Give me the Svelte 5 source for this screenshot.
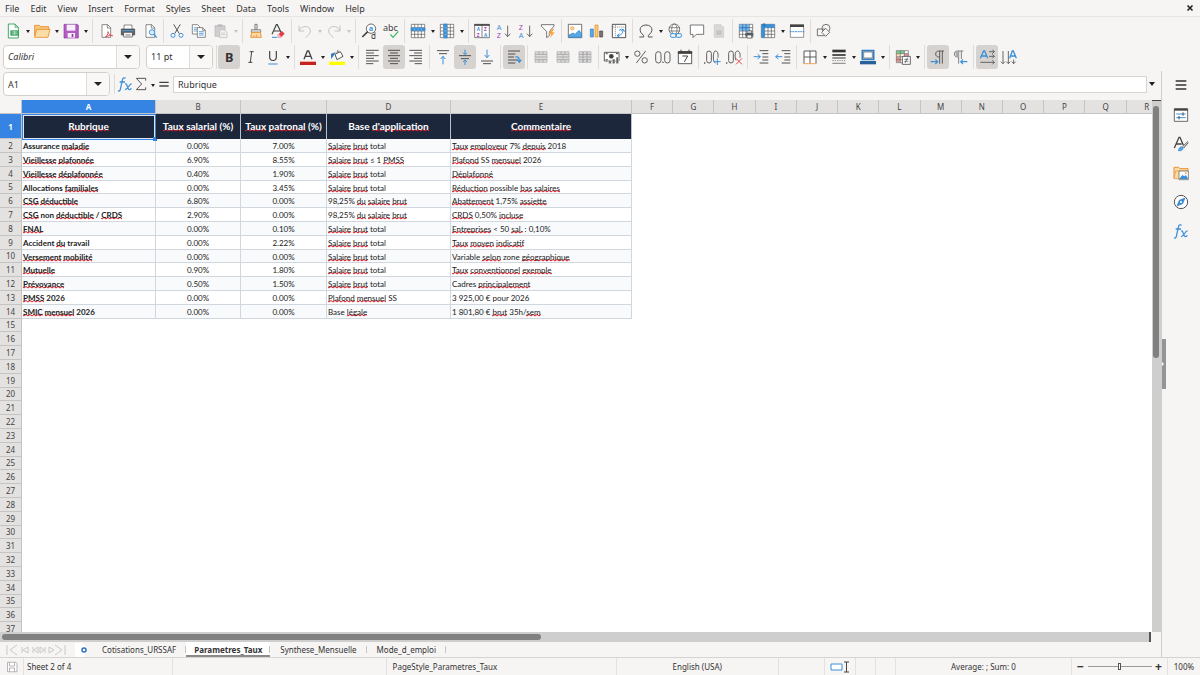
<script>
    const menus = ["File", "Edit", "View", "Insert", "Format", "Styles", "Sheet", "Data", "Tools", "Window", "Help"]

    const blue = "#3a8fd9"
    const page = '<path d="M6 2.500h8.500l4.500 4.500v14.500h-13z" fill="#fff" stroke="#555"/><path d="M14 2.500v5h5" fill="none" stroke="#555"/>'
    function lines(list, color = "#444") {
        return list.map(([x1, x2, y]) => `<path d="M${x1} ${y}H${x2}" stroke="${color}" stroke-width="1.400"/>`).join("")
    }
    const gridbase = '<path d="M2 2h20v20H2zM2 7h20M2 12h20M2 17h20M7 2v20M12 2v20M17 2v20" fill="#fff" stroke="#555"/>'
    const mergebase = '<path d="M3 4h18v16H3z" fill="#ddd" stroke="#aaa"/><path d="M3 8h18M3 16h18M3 12h18M9 4v4M15 4v4M9 16v4M15 16v4" fill="none" stroke="#aaa" stroke-width="1.500"/>'

    // every icon is drawn on a 24 x 24 box
    const icons = {
        new: '<path d="M5 1.500h10l5 5v16H5z" fill="#fff" stroke="#35a35c" stroke-width="1.400"/><path d="M15 1.500v5h5z" fill="#bfe6c8" stroke="#35a35c"/><path d="M8 11h13v8H8z" fill="#35a35c"/><path d="M10 13.500h9M10 16.200h9M14.500 12v6" stroke="#fff" stroke-width=".8"/>',
        open: '<path d="M1 20V3.500h7l2 2h12v5" fill="#f7c77d" stroke="#e58b28" stroke-width="1.300"/><path d="M1 21.500l3-12h20l-3 12z" fill="#fbdca6" stroke="#e58b28" stroke-width="1.200"/>',
        save: '<path d="M1.500 2h20l1.500 1.500V22.500H1.500z" fill="#b25cc4" stroke="#8d3ca3"/><path d="M5.500 2.500h13v9h-13z" fill="#f6eef8"/><path d="M7 15h11v7H7z" fill="#f6eef8"/><path d="M13 16.500h2.500V21H13z" fill="#8d3ca3"/>',
        pdf: page + '<path d="M11 21c4-2 5-8 4-8s1 5 7 6c-3-1-7 0-11 2z" fill="none" stroke="#e04c5b" stroke-width="1.500"/>',
        print: '<path d="M6 9V3h12v6" fill="#fff" stroke="#555"/><path d="M2 9h20v9H2z" fill="#58636e" stroke="#444"/><path d="M5.500 14h13v7h-13z" fill="#fff" stroke="#444"/><path d="M3.500 11.500h17" stroke="#4ba1df" stroke-width="1.500"/><path d="M8 17h8M8 19h8" stroke="#888"/>',
        preview: page + '<circle cx="15" cy="14" r="4" fill="#d8ecfb" stroke="#3a8fd9" stroke-width="1.400"/><path d="M18 17l4 5" stroke="#3a8fd9" stroke-width="2"/>',
        cut: '<path d="M7 2l8.500 14M17 2L8.500 16" stroke="#555" stroke-width="1.500" fill="none"/><circle cx="6" cy="18.500" r="3" fill="#fff" stroke="#3a8fd9" stroke-width="1.500"/><circle cx="18" cy="18.500" r="3" fill="#fff" stroke="#3a8fd9" stroke-width="1.500"/>',
        copy: '<path d="M2 2.500h8l3 3v11H2z" fill="#fff" stroke="#555"/><path d="M4 7h6M4 9.500h6M4 12h5" stroke="#3a8fd9"/><path d="M9.500 7h8l4 4v10.500h-12z" fill="#fff" stroke="#555"/><path d="M17.500 7v4h4" fill="none" stroke="#555"/><path d="M12 13h7M12 15.500h7M12 18h7" stroke="#3a8fd9" stroke-width="1.200"/>',
        paste: '<path d="M3 4h15v16H3z" fill="#cfcfcf" stroke="#b5b5b5"/><path d="M7 2h7v4H7z" fill="#bbb"/><path d="M10 10h7l4 4v8H10z" fill="#f1f1f1" stroke="#b5b5b5"/><path d="M12 15h6M12 17.500h7" stroke="#c2c2c2"/>',
        brush: '<path d="M10.500 2h3v8h-3z" fill="#fff" stroke="#555" stroke-width="1.200"/><path d="M5 10h14v4H5z" fill="#ddd" stroke="#666"/><path d="M5.500 14h13l1.500 7.500H4z" fill="#fbdca6" stroke="#e58b28" stroke-width="1.300"/><path d="M9 21v-3M13 21v-4" stroke="#e58b28"/>',
        clear: '<path d="M3 17L9.500 2.500h1.500L17 15M5.500 12H15" fill="none" stroke="#444" stroke-width="1.700"/><path d="M3 21.500h8" stroke="#3a8fd9" stroke-width="1.500"/><path d="M11 18l7-6 4 4-6 6h-3z" fill="#e23e4a"/><path d="M11 18l2-2 4 5-1 1h-3z" fill="#f7b6bb"/>',
        undo: '<path d="M3 4v8h8M3 12c3-9 17-9 17 0 0 5-4 6-7 10" fill="none" stroke="#c4c4c4" stroke-width="1.500"/>',
        redo: '<path d="M21 4v8h-8M21 12c-3-9-17-9-17 0 0 5 4 6 7 10" fill="none" stroke="#c4c4c4" stroke-width="1.500"/>',
        find: '<circle cx="15" cy="8.500" r="7" fill="#fff" stroke="#555" stroke-width="1.300"/><path d="M10 13l-8 8" stroke="#444" stroke-width="2.500"/><text x="11.500" y="12" font-size="11" font-weight="700" fill="#3a8fd9">a</text><text x="15" y="24" font-size="12" fill="#333">d</text>',
        spell: '<text x="0" y="12" font-size="13.500" fill="#444">abc</text><path d="M11 17l4 4.500 8-9" fill="none" stroke="#35b566" stroke-width="1.800"/>',
        row: gridbase + '<path d="M1 7h22v5H1z" fill="#3a8fd9"/><path d="M7 7v5M12 7v5M17 7v5" stroke="#7cc0f3"/>',
        col: gridbase + '<path d="M7 1h5.500v22H7z" fill="#3a8fd9"/><path d="M7 7h5M7 12h5M7 17h5" stroke="#7cc0f3"/>',
        sort: '<path d="M1 2h22v20H1zM12 2v20" fill="#fff" stroke="#444"/><path d="M.5 3h23" stroke="#444" stroke-width="2.500"/><text x="4" y="12.500" font-size="7" font-weight="700" fill="#3a8fd9">A</text><text x="4" y="21" font-size="7" font-weight="700" fill="#a347ba">Z</text><text x="15" y="12.500" font-size="7" font-weight="700" fill="#a347ba">Z</text><text x="15" y="21" font-size="7" font-weight="700" fill="#3a8fd9">A</text>',
        az: '<text x="1" y="10" font-size="11" fill="#3a8fd9">A</text><text x="1" y="23" font-size="11" fill="#a347ba">Z</text><path d="M17.500 4v16M13.500 16l4 4.500 4-4.500" fill="none" stroke="#555" stroke-width="1.300"/>',
        za: '<text x="1" y="10" font-size="11" fill="#a347ba">Z</text><text x="1" y="23" font-size="11" fill="#3a8fd9">A</text><path d="M17.500 4v16M13.500 16l4 4.500 4-4.500" fill="none" stroke="#555" stroke-width="1.300"/>',
        filter: '<path d="M2 2.500h19v2L14 13v6l-4 3v-9L2 4.500z" fill="#fff" stroke="#555" stroke-width="1.200"/><path d="M17 9l-4 8h4l-2 6 7-9h-4l3-5z" fill="#f6a544"/>',
        image: '<path d="M2 2h20v20H2z" fill="#fff" stroke="#555" stroke-width="1.200"/><path d="M3 18l6-3 3 2 6-6 4 5v5.500H3z" fill="#58a9e6" stroke="#2f7fc5"/><circle cx="8" cy="8" r="2.500" fill="#fbdca6" stroke="#e58b28"/>',
        chart: '<path d="M2 9h4.500v12H2z" fill="#58a9e6" stroke="#2f7fc5"/><path d="M9 3h4.500v18H9z" fill="#fbc87a" stroke="#e58b28"/><path d="M16 12h4.500v9H16z" fill="#777" stroke="#444"/>',
        pivot: '<path d="M2 2h20v20H2z" fill="#fff" stroke="#555" stroke-width="1.500"/><path d="M3 6h18M6.500 3v18" stroke="#777" stroke-dasharray="2 1"/><path d="M9 19c6 0 9-3 9-9M18 9l-3 3.500M18 9l2.500 4M9 19l4-3M9 19l4 2.500M12 11l4-2" fill="none" stroke="#3a8fd9" stroke-width="1.500"/>',
        omega: '<path d="M2 21h6.500v-2.500C0 13 2 3 12 3s12 10 3.500 15.500V21H22" fill="none" stroke="#555" stroke-width="1.500"/>',
        link: '<circle cx="11" cy="9.500" r="8" fill="#fff" stroke="#555" stroke-width="1.200"/><ellipse cx="11" cy="9.500" rx="4" ry="8" fill="none" stroke="#555"/><path d="M3 7h16M3 12h16" stroke="#555"/><rect x="5" y="16" width="9" height="5.500" rx="2.700" fill="#f6f5f4" stroke="#3a8fd9" stroke-width="1.500"/><rect x="13" y="16" width="9" height="5.500" rx="2.700" fill="none" stroke="#3a8fd9" stroke-width="1.500"/>',
        comment: '<path d="M2 3h20v14H11l-5 5v-5H2z" fill="#fff" stroke="#555" stroke-width="1.200"/>',
        header: '<path d="M5 2.500h10l4 4v15H5z" fill="#d8d8d8" stroke="#c8c8c8"/><path d="M8 11h8v7H8z" fill="#c4c4c4"/>',
        area: gridbase + '<path d="M2 2h15v10H2z" fill="#58a9e6" opacity=".8"/><path d="M2 7h15M7 2v10M12 2v10" stroke="#2671b5"/><path d="M11 15h12v5H11z" fill="#58636e"/><path d="M13.500 12h7v3h-7zM13.500 18h7v4.500h-7z" fill="#fff" stroke="#444"/>',
        freeze: gridbase + '<path d="M2 2h20v5H7v15H2z" fill="#3a8fd9"/><path d="M6 0v6M3 3h6" stroke="#2671b5" stroke-width="1.500"/>',
        split: '<path d="M1.500 2h21v4.500h-21z" fill="#444"/><path d="M2 6v15.500h20V6" fill="#fff" stroke="#666"/><path d="M1 13h22" stroke="#3a8fd9" stroke-width="1.500" stroke-dasharray="3 1"/>',
        shapes: '<path d="M2 9h11v10H2z" fill="none" stroke="#555" stroke-width="1.200"/><circle cx="15" cy="8" r="6" fill="none" stroke="#555" stroke-width="1.200"/><path d="M14.500 8l6 6-6 6-6-6z" fill="#f6f5f4" stroke="#555" stroke-width="1.200"/>',
        bold: '<text x="6" y="19" font-size="19" font-weight="700" fill="#333">B</text>',
        italic: '<path d="M10 4h6M8 20h6M13 4l-2 16" fill="none" stroke="#444" stroke-width="1.500"/>',
        underline: '<path d="M7 3v9c0 7 10 7 10 0V3" fill="none" stroke="#444" stroke-width="1.800"/><path d="M5 22.500h14" stroke="#3a8fd9" stroke-width="1.500"/>',
        color: '<path d="M6 15.500L11 3h2l5 12.500M8 11h8" fill="none" stroke="#444" stroke-width="2"/><path d="M0 19h24v5H0z" fill="#c9211e"/>',
        fill: '<path d="M9 8l8-4 4 7-9 5z" fill="#fff" stroke="#555" stroke-width="1.500"/><path d="M12 6l1-4 2 4" fill="none" stroke="#555"/><path d="M3 15V7l7-2-3 5z" fill="#2f7fc5"/><path d="M0 19h24v5H0z" fill="#ffff00"/>',
        left: lines([[3, 22, 2], [3, 15, 6], [3, 22, 10], [3, 15, 14], [3, 22, 18], [3, 14, 22]]),
        center: lines([[3, 21, 2], [6, 18, 6], [3, 21, 10], [6, 18, 14], [3, 21, 18], [6, 18, 22]]),
        right: lines([[2, 21, 2], [9, 21, 6], [2, 21, 10], [9, 21, 14], [2, 21, 18], [10, 21, 22]]),
        top: lines([[3, 21, 2.5], [6, 18, 7]]) + `<path d="M12 23V11M8.500 15l3.500-4 3.500 4" fill="none" stroke="${blue}" stroke-width="1.500"/>`,
        middle: lines([[3, 21, 10], [6, 18, 14.5]]) + `<path d="M12 1v7M9 5.500l3 3 3-3M12 24v-7M9 19.500l3-3 3 3" fill="none" stroke="${blue}" stroke-width="1.500"/>`,
        bottom: lines([[3, 21, 18], [6, 18, 22]]) + `<path d="M12 1v12M8.500 9l3.500 4 3.500-4" fill="none" stroke="${blue}" stroke-width="1.500"/>`,
        wrap: lines([[3, 21, 3], [3, 14, 7.5], [3, 12, 12], [3, 18, 16.5], [3, 14, 21]]) + `<path d="M14 12c4-1 6 1 6 6M16.500 16l3.500 4 3-4" fill="none" stroke="${blue}" stroke-width="1.800"/>`,
        merge: mergebase,
        mergec: mergebase + '<path d="M12 8v8" stroke="#aaa"/>',
        unmerge: mergebase + '<path d="M9 4v16M15 4v16" stroke="#aaa" stroke-width="1.500"/>',
        money: '<path d="M.5 5h22v13H.5z" fill="#fff" stroke="#444" stroke-width="1.300"/><circle cx="11" cy="11" r="3.500" fill="#444"/><path d="M2.500 7h3M18 7h3M2.500 16h3" stroke="#444" stroke-width="1.500"/><path d="M7 17h4v5H7zM12.500 15h4v7h-4zM18 12h4v10h-4z" fill="#666" stroke="#f6f5f4" stroke-width=".8"/>',
        percent: '<circle cx="6.500" cy="7" r="4" fill="none" stroke="#555" stroke-width="1.400"/><circle cx="17.500" cy="17" r="4" fill="none" stroke="#555" stroke-width="1.400"/><path d="M19 3L5 21" stroke="#555" stroke-width="1.400"/>',
        number: '<rect x="1" y="4" width="8" height="17" rx="4" fill="none" stroke="#555" stroke-width="1.400"/><rect x="14.500" y="4" width="8" height="17" rx="4" fill="none" stroke="#555" stroke-width="1.400"/><path d="M11 20h2" stroke="#555" stroke-width="2"/>',
        date: '<path d="M2 4h20v18H2z" fill="#fff" stroke="#444" stroke-width="1.300"/><path d="M2 4h20v2.500H2zM6 1v4M18 1v4" fill="#444" stroke="#444" stroke-width="1.500"/><path d="M8 10.500h8l-5 9" fill="none" stroke="#444" stroke-width="1.500"/>',
        adddec: '<path d="M0 21h2" stroke="#555" stroke-width="2"/><rect x="4" y="3" width="7" height="18" rx="3.500" fill="none" stroke="#555" stroke-width="1.400"/><path d="M17 21c-4 0-4-18 0-18 4 0 4.500 5 4 10" fill="none" stroke="#555" stroke-width="1.400"/><path d="M20 14v10M15 19h10" stroke="#3a8fd9" stroke-width="1.500"/>',
        deldec: '<path d="M0 21h2" stroke="#555" stroke-width="2"/><rect x="4" y="3" width="7" height="18" rx="3.500" fill="none" stroke="#555" stroke-width="1.400"/><path d="M15 17c-2-4-2-14 2-14s4.500 5 4 10" fill="none" stroke="#555" stroke-width="1.400"/><path d="M15 14l9 9M24 14l-9 9" stroke="#e04c4c" stroke-width="1.500"/>',
        indent: lines([[10, 23, 2.5], [14, 23, 7], [14, 23, 12], [14, 23, 16.5], [10, 23, 21]]) + `<path d="M1 11.500h10M7 8l4 3.500L7 15" fill="none" stroke="${blue}" stroke-width="1.500"/>`,
        outdent: lines([[10, 23, 2.5], [14, 23, 7], [14, 23, 12], [14, 23, 16.5], [10, 23, 21]]) + `<path d="M1 11.500h10M5 8l-4 3.500L5 15" fill="none" stroke="${blue}" stroke-width="1.500"/>`,
        borders: '<path d="M3 22V3h18v19M12 3v19M3 12h18" fill="#fff" stroke="#444" stroke-width="1.300"/><path d="M3 22h18" stroke="#f0a35e" stroke-width="1.500"/>',
        style: '<path d="M2 3h20" stroke="#333" stroke-width="4"/><path d="M2 9h20" stroke="#333" stroke-width="2.500"/><path d="M2 13.500h20" stroke="#333" stroke-width="1.500"/><path d="M2 17.500h20" stroke="#555" stroke-dasharray="2 1.500"/><path d="M2 21.500h20" stroke="#444"/>',
        bcolor: '<path d="M3.500 2.500h17v13h-17z" fill="#fff" stroke="#2f7fc5" stroke-width="2.500"/><path d="M5.500 4.500h13v9h-13z" fill="#fff" stroke="#555"/><path d="M0 18h24v5H0z" fill="#2a6099"/>',
        cond: '<path d="M2 2.500h18v18H2z" fill="#fff"/><path d="M2 2.500h12V7H2z" fill="#7bd08f"/><path d="M14 7h6v4h-6zM2 12h6v8H2z" fill="#f0958f"/><path d="M2 7h6v4H2z" fill="#fbdca6"/><path d="M2 2.500h18v18H2zM2 7h18M2 11.500h18M2 16h18M8 2.500v18M14 2.500v18" fill="none" stroke="#666"/><path d="M11 11h12v12H11z" fill="#fff" stroke="#444" stroke-width="1.200"/><path d="M14 15.500h6M14 18.500h6M19 13l-4 8" stroke="#444"/>',
        ltr: '<path d="M21 3h-8c-6 0-6 9 0 9h2M14.500 3v19M18.500 3v19" fill="none" stroke="#555" stroke-width="1.400"/><path d="M1 19h10M8 15.500l3.500 3.500L8 22.500" fill="none" stroke="#3a8fd9" stroke-width="1.700"/>',
        rtl: '<path d="M17 3H8c-6 0-6 9 0 9h1M10 3v19M14 3v12" fill="none" stroke="#777" stroke-width="1.400"/><path d="M5 4h5v8H6z" fill="#aaa"/><path d="M23 19H13M16.500 15.500L13 19l3.500 3.500" fill="none" stroke="#3a8fd9" stroke-width="1.700"/>',
        horiz: '<path d="M2 14L7 3h1.500L13 14M4 10.500h7" fill="none" stroke="#3a8fd9" stroke-width="2"/><path d="M15 4h8M15 11h8M2 20h21M20 1l3 3-3 3M20 8l3 3-3 3M20 17l3 3-3 3" fill="none" stroke="#555" stroke-width="1.300"/>',
        vert: '<path d="M13 14l4-11h1.500l4.500 11M14 10.500h7" fill="none" stroke="#3a8fd9" stroke-width="2"/><path d="M3 3v19M11 3v19M19 16v6M0 19l3 3 3-3M8 19l3 3 3-3M16 19l3 3 3-3" fill="none" stroke="#555" stroke-width="1.300"/>',
        fx: '<path d="M13 3.500c-3-2-4.500 0-5 3L5 20c-.5 2.500-2 3-3.500 2M4 9h8" fill="none" stroke="#3a8fd9" stroke-width="1.900"/><path d="M12 12c4-2 3 9 7 8.500 1 0 2-1 2.500-2M22 12c-4-1-5 9-10 8.500" fill="none" stroke="#3a8fd9" stroke-width="1.900"/>',
        sigma: '<path d="M19 7V3.500H5l8 8.500-8 8.500h14V17" fill="none" stroke="#555" stroke-width="1.500"/>',
        equals: '<path d="M5 9.500h14M5 15h14" stroke="#444" stroke-width="2"/>',
        burger: '<path d="M4 6h16M4 12h16M4 18h16" stroke="#333" stroke-width="2.200"/>',
        props: '<path d="M2 2.500h20v19H2z" fill="#fff" stroke="#555" stroke-width="1.300"/><path d="M2 4h20" stroke="#444" stroke-width="3"/><path d="M5 10.500h14M5 16h14" stroke="#3a8fd9" stroke-width="1.500"/><path d="M15 8v5M9 13.500v5" stroke="#444" stroke-width="1.500"/>',
        styles: '<path d="M2 18L9 2h1.500l5 12M5 12h8" fill="none" stroke="#444" stroke-width="2"/><path d="M22.500 8l-8 8M23 10l-7 8" stroke="#555" stroke-width="1.500"/><path d="M8 22c1-5 4-7 7-5 1 3-2 6-7 5z" fill="#58a9e6" stroke="#2f7fc5"/>',
        gallery: '<path d="M1.500 20V3.500h7l2 2h12V9" fill="#fbdca6" stroke="#e58b28" stroke-width="1.400"/><path d="M1.500 20.500L4 9h18v12z" fill="#fbdca6" stroke="#e58b28"/><path d="M9 9h14v13H9z" fill="#fff" stroke="#555"/><path d="M10 20l4-5 3 2 2-2 3 4v2H10z" fill="#3a8fd9"/><circle cx="19" cy="12" r="1.300" fill="#e58b28"/>',
        compass: '<circle cx="12" cy="12" r="10" fill="#fff" stroke="#555" stroke-width="1.500"/><path d="M18 6l-3.500 8.500L6 18l3.500-8.500z" fill="#3a8fd9" stroke="#2f7fc5"/><circle cx="12" cy="12" r="1.600" fill="#fff"/>',
        disk: '<path d="M3 2.500h17l2 2v17H3z" fill="#fff" stroke="#999" stroke-width="1.400"/><path d="M7 3v7h10V3M7 21v-7h10v7" fill="none" stroke="#999" stroke-width="1.400"/>'
    }

    // [icon, label, flags]: v = has a drop-down, o = pressed, d = disabled
    const standard = [
        [["new", "New", "v"], ["open", "Open", "v"], ["save", "Save", "v"]],
        [["pdf", "Export as PDF"], ["print", "Print"], ["preview", "Print Preview"]],
        [["cut", "Cut"], ["copy", "Copy"], ["paste", "Paste", "vd"]],
        [["brush", "Clone Formatting"], ["clear", "Clear Direct Formatting"]],
        [["undo", "Undo", "vd"], ["redo", "Redo", "vd"]],
        [["find", "Find and Replace"], ["spell", "Spelling"]],
        [["row", "Row", "v"], ["col", "Column", "v"]],
        [["sort", "Sort"], ["az", "Sort Ascending"], ["za", "Sort Descending"], ["filter", "AutoFilter"]],
        [["image", "Insert Image"], ["chart", "Insert Chart"], ["pivot", "Pivot Table"]],
        [["omega", "Special Character", "v"], ["link", "Hyperlink"], ["comment", "Comment"], ["header", "Headers and Footers", "d"]],
        [["area", "Define Print Area"], ["freeze", "Freeze Rows and Columns", "v"], ["split", "Split Window"]],
        [["shapes", "Show Draw Functions"]]
    ]
    const formatting = [
        [["bold", "Bold", "o"], ["italic", "Italic"], ["underline", "Underline", "v"]],
        [["color", "Font Color", "v"], ["fill", "Background Color", "v"]],
        [["left", "Align Left"], ["center", "Center Horizontally", "o"], ["right", "Align Right"]],
        [["top", "Align Top"], ["middle", "Center Vertically", "o"], ["bottom", "Align Bottom"]],
        [["wrap", "Wrap Text", "o"]],
        [["merge", "Merge and Center Cells", "d"], ["mergec", "Merge Cells", "d"], ["unmerge", "Unmerge Cells", "d"]],
        [["money", "Format as Currency", "v"], ["percent", "Format as Percent"], ["number", "Format as Number"], ["date", "Format as Date"]],
        [["adddec", "Add Decimal Place"], ["deldec", "Delete Decimal Place"]],
        [["indent", "Increase Indent"], ["outdent", "Decrease Indent"]],
        [["borders", "Borders", "v"], ["style", "Border Style", "v"], ["bcolor", "Border Color", "v"]],
        [["cond", "Conditional", "v"]],
        [["ltr", "Left-To-Right", "o"], ["rtl", "Right-To-Left"]],
        [["horiz", "Text direction from left to right", "o"], ["vert", "Text direction from top to bottom"]]
    ]
    const sidebar = [["burger", "Sidebar Settings"], ["props", "Properties"], ["styles", "Styles"], ["gallery", "Gallery"], ["compass", "Navigator"], ["fx", "Functions"]]

    const columns = "ABCDEFGHIJKLMNOPQR".split("")
    const extra = columns.slice(5)

    // a leading ~ marks a word the spell checker does not know
    const heads = ["~Rubrique", "~Taux ~salarial (%)", "~Taux ~patronal (%)", "Base ~d'application", "~Commentaire"]
    const brut = "~Salaire ~brut total"
    const rows = [
        ["Assurance ~maladie", "0.00%", "7.00%", brut, "~Taux ~employeur 7% ~depuis 2018"],
        ["~Vieillesse ~plafonnée", "6.90%", "8.55%", "~Salaire ~brut ≤ 1 ~PMSS", "~Plafond SS ~mensuel 2026"],
        ["~Vieillesse ~déplafonnée", "0.40%", "1.90%", brut, "~Déplafonné"],
        ["Allocations ~familiales", "0.00%", "3.45%", brut, "~Réduction possible ~bas ~salaires"],
        ["~CSG ~déductible", "6.80%", "0.00%", "98,25% ~du ~salaire ~brut", "~Abattement 1,75% ~assiette"],
        ["~CSG non ~déductible / ~CRDS", "2.90%", "0.00%", "98,25% ~du ~salaire ~brut", "~CRDS 0,50% ~incluse"],
        ["~FNAL", "0.00%", "0.10%", brut, "~Entreprises < 50 ~sal. : 0,10%"],
        ["Accident ~du travail", "0.00%", "2.22%", brut, "~Taux ~moyen ~indicatif"],
        ["~Versement ~mobilité", "0.00%", "0.00%", brut, "Variable ~selon zone ~géographique"],
        ["~Mutuelle", "0.90%", "1.80%", brut, "~Taux ~conventionnel ~exemple"],
        ["~Prévoyance", "0.50%", "1.50%", brut, "Cadres ~principalement"],
        ["~PMSS 2026", "0.00%", "0.00%", "~Plafond ~mensuel SS", "3 925,00 € pour 2026"],
        ["~SMIC ~mensuel 2026", "0.00%", "0.00%", "Base ~légale", "1 801,80 € ~brut 35h/~sem"]
    ]
    const emptyrows = Array.from({ length: 23 }, (_, i) => i + 15)

    function pieces(text) {
        return text.split(/(~[^\s~]+)/).filter((p) => p !== "")
    }

    const sheets = ["Cotisations_URSSAF", "Parametres_Taux", "Synthese_Mensuelle", "Mode_d_emploi"]
    let current = $state("Parametres_Taux")
    let font = $state("Calibri")
    let size = $state("11 pt")
    let cellname = $state("A1")
    let formula = $state("Rubrique")
    let zoom = $state(50)
</script>

{#snippet icon(name)}
    <svg class="icon" viewBox="0 0 24 24" aria-hidden="true">{@html icons[name]}</svg>
{/snippet}

{#snippet words(text)}{#each pieces(text) as p}{#if p[0] === "~"}<span class="typo">{p.slice(1)}</span>{:else}{p}{/if}{/each}{/snippet}

{#snippet tools(groups)}
    {#each groups as group}
        <div class="group">
            {#each group as [name, label, flags = ""]}
                <button class="tool" class:on={flags.includes("o")} disabled={flags.includes("d")} aria-label={label}>{@render icon(name)}</button>
                {#if flags.includes("v")}
                    <button class="caret" disabled={flags.includes("d")} aria-label="{label} options"></button>
                {/if}
            {/each}
        </div>
    {/each}
{/snippet}

<div class="window">
    <nav class="menubar">
        {#each menus as menu}
            <button>{menu}</button>
        {/each}
        <button class="close" aria-label="Close document">
            <svg viewBox="0 0 8 8"><path d="M1.500 1.500l5 5M6.500 1.500l-5 5" stroke="#222" stroke-width="1.600" /></svg>
        </button>
    </nav>

    <div class="toolbar">{@render tools(standard)}</div>

    <div class="toolbar second">
        <div class="combo fontname">
            <input aria-label="Font name" bind:value={font}>
            <button aria-label="Font list"></button>
        </div>
        <div class="combo fontsize">
            <input aria-label="Font size" bind:value={size}>
            <button aria-label="Size list"></button>
        </div>
        <div class="groups">{@render tools(formatting)}</div>
    </div>

    <div class="work">
        <main>
            <div class="formulabar">
                <div class="combo cellname">
                    <input aria-label="Name box" bind:value={cellname}>
                    <button aria-label="Named ranges"></button>
                </div>
                <div class="fxtools">
                    <button aria-label="Function wizard">{@render icon("fx")}</button>
                    <button aria-label="Select function">{@render icon("sigma")}</button>
                    <button class="caret" aria-label="Function list"></button>
                    <button aria-label="Formula">{@render icon("equals")}</button>
                </div>
                <input class="formula" aria-label="Formula input" bind:value={formula}>
                <button class="caret expand" aria-label="Expand formula bar"></button>
            </div>

            <div class="sheetarea">
                <div class="sheet">
                    <table>
                        <colgroup>
                            <col class="cnum"><col class="ca"><col class="cb"><col class="cc"><col class="cd"><col class="ce">
                            {#each extra as c}<col>{/each}
                        </colgroup>
                        <thead>
                            <tr>
                                <th></th>
                                {#each columns as c}
                                    <th class:picked={c === "A"}>{c}</th>
                                {/each}
                            </tr>
                        </thead>
                        <tbody>
                            <tr class="titles">
                                <th class="picked">1</th>
                                {#each heads as head, i}
                                    <td>{@render words(head)}{#if i === 0}<div class="cursor"></div>{/if}</td>
                                {/each}
                                <td class="blank" colspan="13"></td>
                            </tr>
                            {#each rows as row, i}
                                <tr class="data">
                                    <th>{i + 2}</th>
                                    {#each row as cell}
                                        <td>{@render words(cell)}</td>
                                    {/each}
                                    <td class="blank" colspan="13"></td>
                                </tr>
                            {/each}
                            {#each emptyrows as n}
                                <tr>
                                    <th>{n}</th>
                                    <td class="blank" colspan="18"></td>
                                </tr>
                            {/each}
                        </tbody>
                    </table>
                </div>
                <div class="vscroll"><div></div></div>
            </div>
            <div class="hscroll"><div></div></div>

            <div class="tabs">
                <svg class="navarrows" viewBox="0 0 60 12" aria-hidden="true">
                    <path d="M1 1v10M11 1L4 6l7 5M16 3v6M22 3l-5 3 5 3zM27 3v6M32 3l-4 3 4 3zM34 3l4 3-4 3zM39 3v6M43 3l5 3-5 3zM49 1l7 5-7 5M59 1v10" fill="none" stroke="#c9c9c9" />
                </svg>
                <button class="add" aria-label="Add sheet">
                    <svg viewBox="0 0 12 14"><path d="M0 0h7l3 3v11H0z" fill="#fff" /><circle cx="9" cy="7" r="2" fill="#fff" stroke="#2f6fc0" stroke-width="1.500" /></svg>
                </button>
                {#each sheets as sheet}
                    <button class="tab" class:active={sheet === current} onclick={() => current = sheet}>{sheet}</button>
                {/each}
            </div>
        </main>

        <aside>
            {#each sidebar as [name, label]}
                <button aria-label={label}>{@render icon(name)}</button>
            {/each}
            <button class="handle" aria-label="Hide sidebar"></button>
        </aside>
    </div>

    <footer>
        <span class="disk">{@render icon("disk")}</span>
        <span class="count">Sheet 2 of 4</span>
        <span class="space"></span>
        <span class="pagestyle">PageStyle_Parametres_Taux</span>
        <span class="lang">English (USA)</span>
        <span class="insert"></span>
        <span class="mode">
            <svg viewBox="0 0 20 12"><path d="M1 3h11v6H1z" fill="#fff" stroke="#3a8fd9" /><path d="M14 1h5M14 11h5M16.500 1v10" fill="none" stroke="#444" /></svg>
        </span>
        <span class="small"></span>
        <span class="small"></span>
        <span class="sum">Average: ; Sum: 0</span>
        <span class="zoom">
            <button aria-label="Zoom out">−</button>
            <input type="range" min="0" max="100" aria-label="Zoom" bind:value={zoom}>
            <button aria-label="Zoom in">+</button>
        </span>
        <span class="percent">100%</span>
    </footer>
</div>

<style>
    :global(body) {
        background: #f6f5f4;
    }
    .window {
        display: flex;
        flex-direction: column;
        height: 100vh;
        overflow: hidden;
        font-family: "Noto Sans", sans-serif;
        font-size: 9px;
        color: #333;
        background: #f6f5f4;
    }
    button, input {
        font: inherit;
        color: inherit;
        margin: 0;
        padding: 0;
        border: 0;
        background: none;
        box-sizing: border-box;
        min-width: 0;
    }
    svg {
        display: block;
    }
    .icon {
        width: 16px;
        height: 16px;
        overflow: visible;
    }

    .menubar {
        display: flex;
        gap: 11px;
        height: 17px;
        padding: 0 6px 0 5px;
        box-sizing: border-box;
        border-bottom: 1px solid #e6e5e4;
    }
    .menubar .close {
        margin-left: auto;
    }
    .close svg {
        width: 8px;
        height: 8px;
    }

    .toolbar {
        display: flex;
        align-items: center;
        height: 27px;
        box-sizing: border-box;
        padding-left: 2px;
    }
    .second {
        padding-bottom: 2px;
    }
    .groups, .group {
        display: flex;
        align-items: center;
    }
    .group + .group {
        border-left: 1px solid #dedddb;
        margin-left: 2px;
        padding-left: 2px;
    }
    .groups {
        border-left: 1px solid #dedddb;
        margin-left: 3px;
        padding-left: 1px;
    }
    .tool {
        display: flex;
        align-items: center;
        justify-content: center;
        width: 22px;
        height: 24px;
        border-radius: 3px;
    }
    .tool.on {
        background: #d5d2cf;
    }
    .caret {
        width: 7px;
        height: 20px;
    }
    .caret:last-child {
        margin-right: 1px;
    }
    .caret::before, .combo button::before {
        content: "";
        display: block;
        width: 0;
        margin: 2px auto 0;
        border: 2px solid transparent;
        border-top: 3px solid #222;
        border-bottom: 0;
    }
    .caret:disabled::before {
        border-top-color: #c4c4c4;
    }

    .combo {
        display: flex;
        height: 24px;
        box-sizing: border-box;
        border: 1px solid #d3d0cc;
        border-radius: 4px;
        background: #fff;
        overflow: hidden;
    }
    .combo input {
        flex: 1;
        padding-left: 4px;
    }
    .combo button {
        width: 23px;
        border-left: 1px solid #dedbd8;
        background: #f9f8f7;
    }
    .combo button::before {
        margin-top: 0;
        border-width: 4px 4px 0;
    }
    .fontname {
        width: 137px;
        margin: 0 6px 0 1px;
        font-style: italic;
    }
    .fontsize {
        width: 67px;
    }

    .work {
        display: flex;
        flex: 1;
        min-height: 0;
    }
    main {
        display: flex;
        flex-direction: column;
        flex: 1;
        min-width: 0;
    }
    .formulabar {
        display: flex;
        align-items: center;
        height: 29px;
        padding: 0 5px 3px 3px;
        box-sizing: border-box;
    }
    .cellname {
        width: 107px;
    }
    .fxtools {
        display: flex;
        align-items: center;
        margin: 0 1px 0 4px;
        padding-left: 2px;
        border-left: 1px solid #dedddb;
    }
    .formula {
        flex: 1;
        height: 17px;
        padding-left: 4px;
        border: 1px solid #d6d4d1;
        background: #fff;
    }
    .caret.expand {
        margin: 0 0 0 2px;
    }
    .expand::before {
        border-width: 4px 3px 0;
        margin: 0;
    }

    .sheetarea {
        display: flex;
        flex: 1;
        min-height: 0;
    }
    .sheet {
        flex: 1;
        min-width: 0;
        overflow: hidden;
        background: #fff;
    }
    table {
        table-layout: fixed;
        width: calc(100% + 16px);
        border-collapse: separate;
        border-spacing: 0;
        font-size: 8px;
        line-height: 11px;
    }
    .cnum { width: 22px; }
    .ca { width: 134px; }
    .cb { width: 85px; }
    .cc { width: 86px; }
    .cd { width: 124px; }
    .ce { width: 181px; }
    th, td {
        box-sizing: border-box;
        height: 14px;
        padding: 0;
        white-space: nowrap;
        overflow: hidden;
    }
    th {
        font-weight: 400;
        color: #444;
        background: #e3e2e1;
        border-right: 1px solid #c4c4c4;
        border-bottom: 1px solid #c4c4c4;
    }
    thead th:first-child {
        background: #f6f5f4;
    }
    th.picked {
        font-weight: 700;
        color: #fff;
        background: #3584e4;
    }
    /* the row height is a little under 14px */
    tbody tr:nth-child(5n + 5) > * {
        height: 13px;
        line-height: 10px;
    }
    td {
        font-family: Lato, Carlito, sans-serif;
        color: #1a1a1a;
    }
    .titles th, .titles td {
        height: 25px;
    }
    .titles td:not(.blank) {
        position: relative;
        overflow: visible;
        text-align: center;
        font-size: 10px;
        font-weight: 700;
        color: #fff;
        background: #1c273b;
        border-right: 1px solid #b9c3cf;
    }
    .data td:not(.blank) {
        padding-top: 1px;
        border-right: 1px solid #d0d7de;
        border-bottom: 1px solid #d0d7de;
    }
    .data:nth-child(even) td:not(.blank) {
        background: #f8fafc;
    }
    .data td:nth-child(2) {
        padding-left: 1px;
        font-weight: 700;
    }
    .data td:nth-child(3), .data td:nth-child(4) {
        text-align: center;
    }
    .data td:nth-child(5), .data td:nth-child(6) {
        padding-left: 1px;
    }
    .typo {
        background: url("data:image/svg+xml,%3Csvg xmlns='http://www.w3.org/2000/svg' width='4' height='3'%3E%3Cpath d='M-1 .5L1 2 3 .5 5 2' fill='none' stroke='%23e01b24'/%3E%3C/svg%3E") left bottom repeat-x;
    }
    .cursor {
        position: absolute;
        inset: 0 -1px -1px 0;
        border: 1px solid #3584e4;
        box-shadow: inset 0 0 0 1px #dfe8f3;
    }
    .cursor::after {
        content: "";
        position: absolute;
        right: -2px;
        bottom: -2px;
        width: 4px;
        height: 4px;
        background: #3584e4;
    }

    .vscroll {
        width: 9px;
        box-sizing: border-box;
        padding: 5px 2px 0 1px;
        background: #cecece;
        border-top: 1px solid #444;
    }
    .vscroll div {
        height: 48%;
        border-radius: 3px;
        background: #808080;
    }
    .hscroll {
        height: 10px;
        box-sizing: border-box;
        margin-right: 10px;
        padding: 2px 0 2px 2px;
        background: #cecece;
        border-right: 2px solid #555;
    }
    .hscroll div {
        width: 47%;
        height: 6px;
        border-radius: 3px;
        background: #808080;
    }

    .tabs {
        display: flex;
        align-items: center;
        height: 15px;
        padding-left: 6px;
        font-size: 8px;
    }
    .navarrows {
        width: 60px;
        height: 12px;
    }
    .add {
        margin: 0 5px 0 9px;
    }
    .add svg {
        width: 12px;
        height: 14px;
    }
    .tab {
        position: relative;
        height: 15px;
        padding: 0 10px 1px;
    }
    .tab::after {
        content: "";
        position: absolute;
        right: 0;
        top: 4px;
        height: 7px;
        border-right: 1px solid #c8c6c4;
    }
    .tab.active {
        padding: 0 8px 1px;
        font-weight: 700;
        background: #fff;
        box-shadow: inset 0 -2px #8a8a8a;
    }

    aside {
        position: relative;
        display: flex;
        flex-direction: column;
        align-items: center;
        gap: 13px;
        width: 39px;
        box-sizing: border-box;
        padding-top: 6px;
        border-left: 1px solid #d0cecc;
    }
    aside button:first-child {
        margin-bottom: 1px;
    }
    .handle {
        position: absolute;
        left: 0;
        top: 268px;
        width: 4px;
        height: 50px;
        background: #959595;
    }
    .handle::before {
        content: "";
        display: block;
        border: 2px solid transparent;
        border-left-color: #fff;
        width: 0;
    }

    footer {
        display: flex;
        height: 18px;
        box-sizing: border-box;
        border-top: 1px solid #d6d4d2;
        font-size: 8px;
    }
    footer > span {
        display: flex;
        align-items: center;
        justify-content: center;
        box-sizing: border-box;
    }
    footer > span + span {
        border-left: 1px solid #e4e2e0;
    }
    .disk { width: 23px; }
    .disk .icon { width: 12px; height: 12px; }
    footer > .count {
        width: 149px;
        justify-content: flex-start;
        padding-left: 3px;
    }
    .space { flex: 216 0 0; }
    footer > .pagestyle {
        flex: 227 0 0;
        justify-content: flex-start;
        padding-left: 6px;
    }
    .lang { flex: 163 0 0; }
    .insert { flex: 46 0 0; }
    .mode { width: 31px; }
    .mode svg { width: 20px; height: 12px; }
    .small { width: 20px; }
    .sum { flex: 178 0 0; }
    .zoom { width: 96px; }
    .zoom button {
        width: 14px;
        font-size: 12px;
        font-weight: 700;
        line-height: 12px;
    }
    .zoom input {
        appearance: none;
        width: 64px;
        height: 12px;
    }
    .zoom input::-webkit-slider-runnable-track {
        height: 1px;
        background: #999;
    }
    .zoom input::-webkit-slider-thumb {
        appearance: none;
        width: 3px;
        height: 7px;
        margin-top: -3px;
        box-sizing: border-box;
        border: 1px solid #555;
        background: #fff;
    }
    .percent { width: 33px; }
</style>
